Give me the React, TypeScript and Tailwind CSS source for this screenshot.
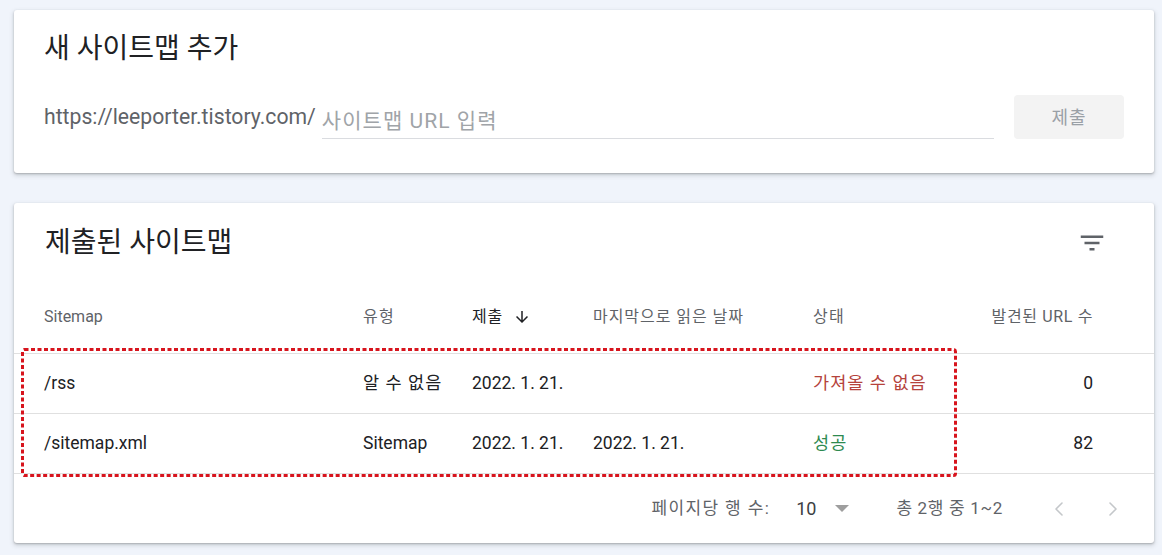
import { ChevronLeft, ChevronRight } from 'lucide-react'

const font = { fontFamily: "Roboto, 'Noto Sans CJK KR', sans-serif" }

const rows = [
  {
    path: '/rss',
    type: '알 수 없음',
    typeKo: true,
    submitted: '2022. 1. 21.',
    lastRead: '',
    status: '가져올 수 없음',
    ok: false,
    count: '0',
  },
  {
    path: '/sitemap.xml',
    type: 'Sitemap',
    typeKo: false,
    submitted: '2022. 1. 21.',
    lastRead: '2022. 1. 21.',
    status: '성공',
    ok: true,
    count: '82',
  },
]

const cardClass =
  'rounded-[3px] bg-white shadow-[0_1px_2px_0_rgba(60,64,67,0.3),0_2px_4px_1px_rgba(60,64,67,0.15)]'

const gridClass = 'grid grid-cols-[319px_109px_121px_220px_1fr] items-center pl-[30px] pr-[61px]'

function FilterIcon() {
  return (
    <svg className="h-[30px] w-[30px] text-[#5f6368]" viewBox="0 0 24 24" fill="currentColor">
      <path d="M10 18h4v-2h-4v2zM3 6v2h18V6H3zm3 7h12v-2H6v2z" />
    </svg>
  )
}

export default function App() {
  return (
    <div className="min-h-[555px] bg-[#f0f4fb] pl-[14px] pr-[8px] pt-[10px] pb-[12px] text-[#202124]" style={font}>
      <section className={`${cardClass} flex h-[163px] flex-col px-[30px] pt-[21px]`}>
        <h2 className="text-[28px] leading-[36px] text-[#202124]">새 사이트맵 추가</h2>
        <div className="mt-[28px] flex items-center">
          <span className="text-[21.2px] text-[#5f6368]">https://leeporter.tistory.com/</span>
          <div className="ml-[6px] flex h-[44px] flex-1 items-end border-b border-[#dadce0] pb-[1px]">
            <span className="text-[21px] tracking-[0.05em] text-[#a0a4a8]">사이트맵 URL 입력</span>
          </div>
          <button
            className="ml-[20px] h-[44px] w-[110px] rounded-[4px] bg-[#f3f3f3] text-[18px] tracking-[0.05em] text-[#9aa0a6]"
            type="button"
          >
            제출
          </button>
        </div>
      </section>

      <section className={`${cardClass} relative mt-[30px] h-[340px]`}>
        <div className="flex h-[78px] items-center justify-between pl-[31px] pr-[47px] pt-[1px]">
          <h2 className="text-[28px] text-[#202124]">제출된 사이트맵</h2>
          <FilterIcon />
        </div>

        <div className={`${gridClass} h-[72px] text-[16px] text-[#5f6368]`}>
          <span>Sitemap</span>
          <span className="tracking-[0.08em]">유형</span>
          <span className="flex items-center gap-[10px] tracking-[0.05em] text-[#202124]">
            제출
            <svg className="h-[18px] w-[18px]" viewBox="0 0 24 24" fill="currentColor">
              <path d="M20 12l-1.41-1.41L13 16.17V4h-2v12.17l-5.58-5.59L4 12l8 8 8-8z" />
            </svg>
          </span>
          <span className="tracking-[0.06em]">마지막으로 읽은 날짜</span>
          <span className="flex justify-between">
            <span className="tracking-[0.08em]">상태</span>
            <span className="tracking-[0.04em]">발견된 URL 수</span>
          </span>
        </div>

        {rows.map((row) => (
          <div
            className={`${gridClass} h-[60px] border-t border-[#e0e0e0] text-[17.5px] text-[#202124]`}
            key={row.path}
          >
            <span>{row.path}</span>
            <span className={row.typeKo ? 'tracking-[0.06em]' : ''}>{row.type}</span>
            <span>{row.submitted}</span>
            <span>{row.lastRead}</span>
            <span className="flex justify-between">
              <span
                className={
                  row.ok ? 'tracking-[0.06em] text-[#2e8a50]' : 'tracking-[0.06em] text-[#b5433c]'
                }
              >
                {row.status}
              </span>
              <span>{row.count}</span>
            </span>
          </div>
        ))}

        <div className="flex h-[70px] items-center justify-end border-t border-[#e0e0e0] pr-[29px] text-[17px] text-[#5f6368]">
          <span className="tracking-[0.08em]">페이지당 행 수:</span>
          <span className="ml-[26px] text-[18px] text-[#3c4043]">10</span>
          <span className="ml-[19px] h-0 w-0 border-x-[7px] border-t-[7px] border-x-transparent border-t-[#9e9e9e]" />
          <span className="ml-[47px] tracking-[0.04em]">총 2행 중 1~2</span>
          <ChevronLeft className="ml-[44px] h-[24px] w-[24px] text-[#c4c7ca]" strokeWidth={1.6} />
          <ChevronRight className="ml-[30px] h-[24px] w-[24px] text-[#c4c7ca]" strokeWidth={1.6} />
        </div>

        {/* annotation box drawn over the two rows */}
        <svg className="absolute left-[7px] top-[145px] h-[129px] w-[936px]" viewBox="0 0 936 129">
          <rect
            x="1.5"
            y="1.5"
            width="933"
            height="126"
            rx="2"
            fill="none"
            stroke="#d7141d"
            strokeWidth="3"
            strokeDasharray="4 2.5"
          />
        </svg>
      </section>
    </div>
  )
}
